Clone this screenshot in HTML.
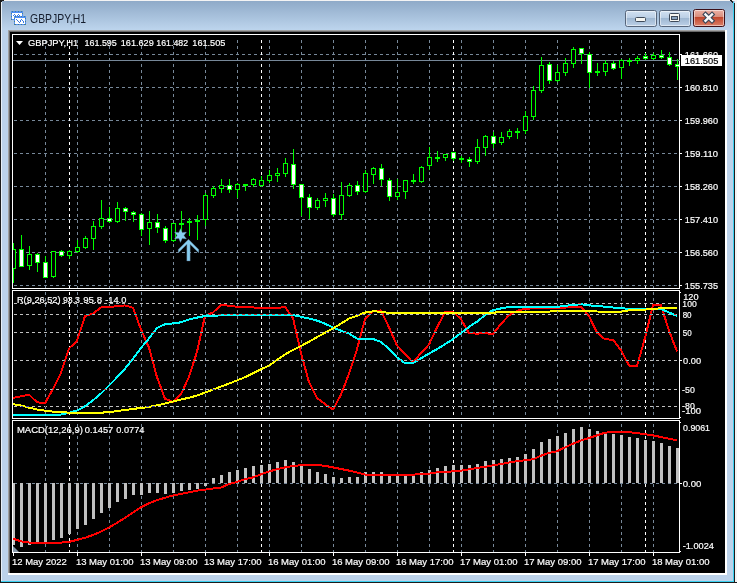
<!DOCTYPE html><html><head><meta charset="utf-8"><style>html,body{margin:0;padding:0;background:#000;overflow:hidden}svg{display:block}text{font-family:"Liberation Sans",sans-serif}</style></head><body>
<svg width="737" height="583" viewBox="0 0 737 583">
<defs><linearGradient id="tb" x1="0" y1="0" x2="0" y2="1"><stop offset="0" stop-color="#8faac8"/><stop offset="1" stop-color="#bdd5ed"/></linearGradient><linearGradient id="btn" x1="0" y1="0" x2="0" y2="1"><stop offset="0" stop-color="#dfe9f5"/><stop offset="0.45" stop-color="#c3d4e7"/><stop offset="0.5" stop-color="#a9bfd6"/><stop offset="1" stop-color="#c9daee"/></linearGradient><linearGradient id="cls" x1="0" y1="0" x2="0" y2="1"><stop offset="0" stop-color="#eab1a3"/><stop offset="0.45" stop-color="#d58572"/><stop offset="0.5" stop-color="#bf4526"/><stop offset="1" stop-color="#d27d66"/></linearGradient></defs>
<rect x="0" y="0" width="737" height="583" fill="#bcd2ea"/>
<rect x="0" y="0" width="737" height="1" fill="#f4f4f4"/>
<rect x="1" y="1" width="733" height="29" fill="url(#tb)"/>
<rect x="0" y="0" width="1" height="583" fill="#1c1c1c"/>
<rect x="1" y="1" width="1" height="581" fill="#e8f0f8"/>
<rect x="734" y="3" width="1" height="580" fill="#1c1c1c"/>
<rect x="735" y="0" width="2" height="583" fill="#f4f4f4"/>
<path d="M730 0 h2 v1 h1 v1 h1 v1 h-2 v-1 h-1 v-1 h-1z" fill="#1c1c1c"/><rect x="732" y="1" width="1" height="1" fill="#2a2a2a"/><rect x="733" y="2" width="1" height="1" fill="#2a2a2a"/>
<path d="M0 0 h4 v1 h-2 v1 h-1 v2 h-1z" fill="#1c1c1c"/>
<rect x="733" y="2" width="1" height="580" fill="#3ad0f0"/>
<rect x="1" y="581" width="733" height="1" fill="#3ad0f0"/>
<rect x="0" y="582" width="737" height="1" fill="#1c1c1c"/>
<rect x="8" y="30" width="719" height="545" fill="#ffffff"/>
<rect x="8" y="30" width="717" height="1" fill="#a0a0a0"/><rect x="8" y="30" width="1" height="543" fill="#a0a0a0"/>
<rect x="9" y="31" width="716" height="1" fill="#696969"/><rect x="9" y="31" width="1" height="542" fill="#696969"/>
<rect x="10" y="32" width="715" height="541" fill="#000"/>
<g shape-rendering="crispEdges">
<rect x="11" y="11" width="12" height="9" fill="#4f8ff7"/>
<rect x="12" y="13" width="10" height="6" fill="#ffffff"/>
<rect x="12" y="11" width="1" height="1" fill="#4a7f86"/>
<rect x="15" y="11" width="1" height="1" fill="#4a7f86"/>
<rect x="18" y="11" width="1" height="1" fill="#4a7f86"/>
<rect x="21" y="11" width="1" height="1" fill="#4a7f86"/>
<rect x="11" y="13" width="1" height="1" fill="#4a7f86"/>
<rect x="22" y="13" width="1" height="1" fill="#4a7f86"/>
<rect x="11" y="16" width="1" height="1" fill="#4a7f86"/>
<rect x="22" y="16" width="1" height="1" fill="#4a7f86"/>
<rect x="11" y="19" width="1" height="1" fill="#4a7f86"/>
<rect x="22" y="19" width="1" height="1" fill="#4a7f86"/>
<rect x="13" y="15" width="1" height="1" fill="#3d7be0"/>
<rect x="14" y="14" width="1" height="1" fill="#3d7be0"/>
<rect x="15" y="15" width="1" height="1" fill="#3d7be0"/>
<rect x="16" y="16" width="1" height="1" fill="#3d7be0"/>
<rect x="17" y="15" width="1" height="1" fill="#3d7be0"/>
<rect x="18" y="14" width="1" height="1" fill="#3d7be0"/>
<rect x="19" y="15" width="1" height="1" fill="#3d7be0"/>
<rect x="20" y="16" width="1" height="1" fill="#3d7be0"/>
<rect x="14" y="16" width="12" height="9" fill="#4f8ff7"/>
<rect x="15" y="18" width="10" height="6" fill="#ffffff"/>
<rect x="15" y="16" width="1" height="1" fill="#4a7f86"/>
<rect x="18" y="16" width="1" height="1" fill="#4a7f86"/>
<rect x="21" y="16" width="1" height="1" fill="#4a7f86"/>
<rect x="24" y="16" width="1" height="1" fill="#4a7f86"/>
<rect x="14" y="18" width="1" height="1" fill="#4a7f86"/>
<rect x="25" y="18" width="1" height="1" fill="#4a7f86"/>
<rect x="14" y="21" width="1" height="1" fill="#4a7f86"/>
<rect x="25" y="21" width="1" height="1" fill="#4a7f86"/>
<rect x="14" y="24" width="1" height="1" fill="#4a7f86"/>
<rect x="25" y="24" width="1" height="1" fill="#4a7f86"/>
<rect x="15" y="24" width="1" height="1" fill="#4a7f86"/>
<rect x="18" y="24" width="1" height="1" fill="#4a7f86"/>
<rect x="21" y="24" width="1" height="1" fill="#4a7f86"/>
<rect x="24" y="24" width="1" height="1" fill="#4a7f86"/>
<rect x="16" y="19" width="1" height="1" fill="#3d7be0"/>
<rect x="17" y="20" width="1" height="1" fill="#3d7be0"/>
<rect x="18" y="21" width="1" height="1" fill="#3d7be0"/>
<rect x="19" y="22" width="1" height="1" fill="#3d7be0"/>
<rect x="20" y="21" width="1" height="1" fill="#3d7be0"/>
<rect x="20" y="20" width="1" height="1" fill="#3d7be0"/>
<rect x="21" y="19" width="1" height="1" fill="#3d7be0"/>
<rect x="22" y="20" width="1" height="1" fill="#3d7be0"/>
<rect x="23" y="21" width="1" height="1" fill="#3d7be0"/>
<rect x="23" y="22" width="1" height="1" fill="#3d7be0"/>
</g>
<defs><linearGradient id="btn2" x1="0" y1="0" x2="0" y2="1"><stop offset="0" stop-color="#d3e2f2"/><stop offset="0.44" stop-color="#bcd0e6"/><stop offset="0.45" stop-color="#9cb5d0"/><stop offset="1" stop-color="#bed2e8"/></linearGradient><linearGradient id="cls2" x1="0" y1="0" x2="0" y2="1"><stop offset="0" stop-color="#eeb4a8"/><stop offset="0.44" stop-color="#d88d7c"/><stop offset="0.45" stop-color="#c0452b"/><stop offset="1" stop-color="#dd846c"/></linearGradient></defs>
<rect x="625.5" y="10.5" width="31" height="16" rx="2" ry="2" fill="url(#btn2)" stroke="#56657a" stroke-width="1"/>
<rect x="626.5" y="11.5" width="29" height="14" rx="1" ry="1" fill="none" stroke="rgba(255,255,255,0.5)" stroke-width="1"/>
<rect x="659.5" y="10.5" width="31" height="16" rx="2" ry="2" fill="url(#btn2)" stroke="#56657a" stroke-width="1"/>
<rect x="660.5" y="11.5" width="29" height="14" rx="1" ry="1" fill="none" stroke="rgba(255,255,255,0.5)" stroke-width="1"/>
<rect x="693.5" y="9.5" width="31" height="17" rx="2" ry="2" fill="url(#cls2)" stroke="#3c1018" stroke-width="1"/>
<rect x="694.5" y="10.5" width="29" height="15" rx="1" ry="1" fill="none" stroke="rgba(255,255,255,0.5)" stroke-width="1"/>
<rect x="635.5" y="17.5" width="10" height="4" rx="1" fill="#f6f6f2" stroke="#3e4a5a" stroke-width="1"/>
<rect x="669.5" y="13.5" width="10" height="8" rx="1" fill="#f6f6f2" stroke="#3e4a5a" stroke-width="1"/>
<rect x="671.5" y="16.5" width="6" height="3" fill="#8aa4c0" stroke="#3e4a5a" stroke-width="1"/>
<path d="M705.5 14.5 L712 20.8 M712 14.5 L705.5 20.8" stroke="#3a4658" stroke-width="4.6" stroke-linecap="square"/>
<path d="M705.5 14.5 L712 20.8 M712 14.5 L705.5 20.8" stroke="#f8f8f8" stroke-width="2.4" stroke-linecap="square"/>
<g shape-rendering="crispEdges">
<rect x="12.5" y="34.5" width="667" height="254" fill="none" stroke="#fff" stroke-width="1"/>
<rect x="12.5" y="290.5" width="667" height="128" fill="none" stroke="#fff" stroke-width="1"/>
<rect x="12.5" y="420.5" width="667" height="132" fill="none" stroke="#fff" stroke-width="1"/>
<line x1="45.5" y1="40" x2="45.5" y2="288" stroke="#778899" stroke-width="1" stroke-dasharray="3 3"/>
<line x1="77.5" y1="40" x2="77.5" y2="288" stroke="#778899" stroke-width="1" stroke-dasharray="3 3"/>
<line x1="109.5" y1="40" x2="109.5" y2="288" stroke="#778899" stroke-width="1" stroke-dasharray="3 3"/>
<line x1="141.5" y1="40" x2="141.5" y2="288" stroke="#778899" stroke-width="1" stroke-dasharray="3 3"/>
<line x1="173.5" y1="40" x2="173.5" y2="288" stroke="#778899" stroke-width="1" stroke-dasharray="3 3"/>
<line x1="205.5" y1="40" x2="205.5" y2="288" stroke="#778899" stroke-width="1" stroke-dasharray="3 3"/>
<line x1="237.5" y1="40" x2="237.5" y2="288" stroke="#778899" stroke-width="1" stroke-dasharray="3 3"/>
<line x1="269.5" y1="40" x2="269.5" y2="288" stroke="#778899" stroke-width="1" stroke-dasharray="3 3"/>
<line x1="301.5" y1="40" x2="301.5" y2="288" stroke="#778899" stroke-width="1" stroke-dasharray="3 3"/>
<line x1="333.5" y1="40" x2="333.5" y2="288" stroke="#778899" stroke-width="1" stroke-dasharray="3 3"/>
<line x1="365.5" y1="40" x2="365.5" y2="288" stroke="#778899" stroke-width="1" stroke-dasharray="3 3"/>
<line x1="397.5" y1="40" x2="397.5" y2="288" stroke="#778899" stroke-width="1" stroke-dasharray="3 3"/>
<line x1="429.5" y1="40" x2="429.5" y2="288" stroke="#778899" stroke-width="1" stroke-dasharray="3 3"/>
<line x1="461.5" y1="40" x2="461.5" y2="288" stroke="#778899" stroke-width="1" stroke-dasharray="3 3"/>
<line x1="493.5" y1="40" x2="493.5" y2="288" stroke="#778899" stroke-width="1" stroke-dasharray="3 3"/>
<line x1="525.5" y1="40" x2="525.5" y2="288" stroke="#778899" stroke-width="1" stroke-dasharray="3 3"/>
<line x1="557.5" y1="40" x2="557.5" y2="288" stroke="#778899" stroke-width="1" stroke-dasharray="3 3"/>
<line x1="589.5" y1="40" x2="589.5" y2="288" stroke="#778899" stroke-width="1" stroke-dasharray="3 3"/>
<line x1="621.5" y1="40" x2="621.5" y2="288" stroke="#778899" stroke-width="1" stroke-dasharray="3 3"/>
<line x1="653.5" y1="40" x2="653.5" y2="288" stroke="#778899" stroke-width="1" stroke-dasharray="3 3"/>
<line x1="45.5" y1="292" x2="45.5" y2="418" stroke="#778899" stroke-width="1" stroke-dasharray="3 3"/>
<line x1="77.5" y1="292" x2="77.5" y2="418" stroke="#778899" stroke-width="1" stroke-dasharray="3 3"/>
<line x1="109.5" y1="292" x2="109.5" y2="418" stroke="#778899" stroke-width="1" stroke-dasharray="3 3"/>
<line x1="141.5" y1="292" x2="141.5" y2="418" stroke="#778899" stroke-width="1" stroke-dasharray="3 3"/>
<line x1="173.5" y1="292" x2="173.5" y2="418" stroke="#778899" stroke-width="1" stroke-dasharray="3 3"/>
<line x1="205.5" y1="292" x2="205.5" y2="418" stroke="#778899" stroke-width="1" stroke-dasharray="3 3"/>
<line x1="237.5" y1="292" x2="237.5" y2="418" stroke="#778899" stroke-width="1" stroke-dasharray="3 3"/>
<line x1="269.5" y1="292" x2="269.5" y2="418" stroke="#778899" stroke-width="1" stroke-dasharray="3 3"/>
<line x1="301.5" y1="292" x2="301.5" y2="418" stroke="#778899" stroke-width="1" stroke-dasharray="3 3"/>
<line x1="333.5" y1="292" x2="333.5" y2="418" stroke="#778899" stroke-width="1" stroke-dasharray="3 3"/>
<line x1="365.5" y1="292" x2="365.5" y2="418" stroke="#778899" stroke-width="1" stroke-dasharray="3 3"/>
<line x1="397.5" y1="292" x2="397.5" y2="418" stroke="#778899" stroke-width="1" stroke-dasharray="3 3"/>
<line x1="429.5" y1="292" x2="429.5" y2="418" stroke="#778899" stroke-width="1" stroke-dasharray="3 3"/>
<line x1="461.5" y1="292" x2="461.5" y2="418" stroke="#778899" stroke-width="1" stroke-dasharray="3 3"/>
<line x1="493.5" y1="292" x2="493.5" y2="418" stroke="#778899" stroke-width="1" stroke-dasharray="3 3"/>
<line x1="525.5" y1="292" x2="525.5" y2="418" stroke="#778899" stroke-width="1" stroke-dasharray="3 3"/>
<line x1="557.5" y1="292" x2="557.5" y2="418" stroke="#778899" stroke-width="1" stroke-dasharray="3 3"/>
<line x1="589.5" y1="292" x2="589.5" y2="418" stroke="#778899" stroke-width="1" stroke-dasharray="3 3"/>
<line x1="621.5" y1="292" x2="621.5" y2="418" stroke="#778899" stroke-width="1" stroke-dasharray="3 3"/>
<line x1="653.5" y1="292" x2="653.5" y2="418" stroke="#778899" stroke-width="1" stroke-dasharray="3 3"/>
<line x1="45.5" y1="424" x2="45.5" y2="552" stroke="#778899" stroke-width="1" stroke-dasharray="3 3"/>
<line x1="77.5" y1="424" x2="77.5" y2="552" stroke="#778899" stroke-width="1" stroke-dasharray="3 3"/>
<line x1="109.5" y1="424" x2="109.5" y2="552" stroke="#778899" stroke-width="1" stroke-dasharray="3 3"/>
<line x1="141.5" y1="424" x2="141.5" y2="552" stroke="#778899" stroke-width="1" stroke-dasharray="3 3"/>
<line x1="173.5" y1="424" x2="173.5" y2="552" stroke="#778899" stroke-width="1" stroke-dasharray="3 3"/>
<line x1="205.5" y1="424" x2="205.5" y2="552" stroke="#778899" stroke-width="1" stroke-dasharray="3 3"/>
<line x1="237.5" y1="424" x2="237.5" y2="552" stroke="#778899" stroke-width="1" stroke-dasharray="3 3"/>
<line x1="269.5" y1="424" x2="269.5" y2="552" stroke="#778899" stroke-width="1" stroke-dasharray="3 3"/>
<line x1="301.5" y1="424" x2="301.5" y2="552" stroke="#778899" stroke-width="1" stroke-dasharray="3 3"/>
<line x1="333.5" y1="424" x2="333.5" y2="552" stroke="#778899" stroke-width="1" stroke-dasharray="3 3"/>
<line x1="365.5" y1="424" x2="365.5" y2="552" stroke="#778899" stroke-width="1" stroke-dasharray="3 3"/>
<line x1="397.5" y1="424" x2="397.5" y2="552" stroke="#778899" stroke-width="1" stroke-dasharray="3 3"/>
<line x1="429.5" y1="424" x2="429.5" y2="552" stroke="#778899" stroke-width="1" stroke-dasharray="3 3"/>
<line x1="461.5" y1="424" x2="461.5" y2="552" stroke="#778899" stroke-width="1" stroke-dasharray="3 3"/>
<line x1="493.5" y1="424" x2="493.5" y2="552" stroke="#778899" stroke-width="1" stroke-dasharray="3 3"/>
<line x1="525.5" y1="424" x2="525.5" y2="552" stroke="#778899" stroke-width="1" stroke-dasharray="3 3"/>
<line x1="557.5" y1="424" x2="557.5" y2="552" stroke="#778899" stroke-width="1" stroke-dasharray="3 3"/>
<line x1="589.5" y1="424" x2="589.5" y2="552" stroke="#778899" stroke-width="1" stroke-dasharray="3 3"/>
<line x1="621.5" y1="424" x2="621.5" y2="552" stroke="#778899" stroke-width="1" stroke-dasharray="3 3"/>
<line x1="653.5" y1="424" x2="653.5" y2="552" stroke="#778899" stroke-width="1" stroke-dasharray="3 3"/>
<line x1="14" y1="54.5" x2="679" y2="54.5" stroke="#778899" stroke-width="1" stroke-dasharray="3 3"/>
<line x1="14" y1="87.5" x2="679" y2="87.5" stroke="#778899" stroke-width="1" stroke-dasharray="3 3"/>
<line x1="14" y1="120.5" x2="679" y2="120.5" stroke="#778899" stroke-width="1" stroke-dasharray="3 3"/>
<line x1="14" y1="153.5" x2="679" y2="153.5" stroke="#778899" stroke-width="1" stroke-dasharray="3 3"/>
<line x1="14" y1="186.5" x2="679" y2="186.5" stroke="#778899" stroke-width="1" stroke-dasharray="3 3"/>
<line x1="14" y1="219.5" x2="679" y2="219.5" stroke="#778899" stroke-width="1" stroke-dasharray="3 3"/>
<line x1="14" y1="252.5" x2="679" y2="252.5" stroke="#778899" stroke-width="1" stroke-dasharray="3 3"/>
<line x1="14" y1="285.5" x2="679" y2="285.5" stroke="#778899" stroke-width="1" stroke-dasharray="3 3"/>
<line x1="14" y1="483.5" x2="679" y2="483.5" stroke="#778899" stroke-width="1" stroke-dasharray="3 3"/>
<line x1="69.5" y1="40" x2="69.5" y2="288" stroke="#ffffff" stroke-width="1" stroke-dasharray="3 3"/>
<line x1="261.5" y1="40" x2="261.5" y2="288" stroke="#ffffff" stroke-width="1" stroke-dasharray="3 3"/>
<line x1="453.5" y1="40" x2="453.5" y2="288" stroke="#ffffff" stroke-width="1" stroke-dasharray="3 3"/>
<line x1="645.5" y1="40" x2="645.5" y2="288" stroke="#ffffff" stroke-width="1" stroke-dasharray="3 3"/>
<line x1="69.5" y1="292" x2="69.5" y2="418" stroke="#ffffff" stroke-width="1" stroke-dasharray="3 3"/>
<line x1="261.5" y1="292" x2="261.5" y2="418" stroke="#ffffff" stroke-width="1" stroke-dasharray="3 3"/>
<line x1="453.5" y1="292" x2="453.5" y2="418" stroke="#ffffff" stroke-width="1" stroke-dasharray="3 3"/>
<line x1="645.5" y1="292" x2="645.5" y2="418" stroke="#ffffff" stroke-width="1" stroke-dasharray="3 3"/>
<line x1="69.5" y1="424" x2="69.5" y2="552" stroke="#ffffff" stroke-width="1" stroke-dasharray="3 3"/>
<line x1="261.5" y1="424" x2="261.5" y2="552" stroke="#ffffff" stroke-width="1" stroke-dasharray="3 3"/>
<line x1="453.5" y1="424" x2="453.5" y2="552" stroke="#ffffff" stroke-width="1" stroke-dasharray="3 3"/>
<line x1="645.5" y1="424" x2="645.5" y2="552" stroke="#ffffff" stroke-width="1" stroke-dasharray="3 3"/>
<rect x="13" y="60" width="667" height="1" fill="#778899"/>
<defs><clipPath id="cmain"><rect x="13" y="35" width="666" height="253"/></clipPath></defs>
<g clip-path="url(#cmain)">
<rect x="13" y="243" width="1" height="40" fill="#00ff00"/>
<rect x="11" y="249" width="5" height="20" fill="#00ff00"/>
<rect x="12" y="250" width="3" height="18" fill="#000000"/>
<rect x="21" y="235" width="1" height="32" fill="#00ff00"/>
<rect x="19" y="249" width="5" height="18" fill="#00ff00"/>
<rect x="20" y="250" width="3" height="16" fill="#ffffff"/>
<rect x="29" y="246" width="1" height="24" fill="#00ff00"/>
<rect x="27" y="254" width="5" height="12" fill="#00ff00"/>
<rect x="28" y="255" width="3" height="10" fill="#000000"/>
<rect x="37" y="253" width="1" height="19" fill="#00ff00"/>
<rect x="35" y="254" width="5" height="9" fill="#00ff00"/>
<rect x="36" y="255" width="3" height="7" fill="#ffffff"/>
<rect x="45" y="256" width="1" height="22" fill="#00ff00"/>
<rect x="43" y="262" width="5" height="16" fill="#00ff00"/>
<rect x="44" y="263" width="3" height="14" fill="#ffffff"/>
<rect x="53" y="251" width="1" height="27" fill="#00ff00"/>
<rect x="51" y="251" width="5" height="26" fill="#00ff00"/>
<rect x="52" y="252" width="3" height="24" fill="#000000"/>
<rect x="61" y="250" width="1" height="7" fill="#00ff00"/>
<rect x="59" y="251" width="5" height="5" fill="#00ff00"/>
<rect x="60" y="252" width="3" height="3" fill="#ffffff"/>
<rect x="69" y="250" width="1" height="9" fill="#00ff00"/>
<rect x="67" y="251" width="5" height="5" fill="#00ff00"/>
<rect x="68" y="252" width="3" height="3" fill="#000000"/>
<rect x="77" y="240" width="1" height="13" fill="#00ff00"/>
<rect x="75" y="247" width="5" height="5" fill="#00ff00"/>
<rect x="76" y="248" width="3" height="3" fill="#000000"/>
<rect x="85" y="236" width="1" height="13" fill="#00ff00"/>
<rect x="83" y="238" width="5" height="10" fill="#00ff00"/>
<rect x="84" y="239" width="3" height="8" fill="#000000"/>
<rect x="93" y="221" width="1" height="29" fill="#00ff00"/>
<rect x="91" y="226" width="5" height="13" fill="#00ff00"/>
<rect x="92" y="227" width="3" height="11" fill="#000000"/>
<rect x="101" y="200" width="1" height="29" fill="#00ff00"/>
<rect x="99" y="218" width="5" height="9" fill="#00ff00"/>
<rect x="100" y="219" width="3" height="7" fill="#000000"/>
<rect x="109" y="207" width="1" height="16" fill="#00ff00"/>
<rect x="107" y="218" width="5" height="4" fill="#00ff00"/>
<rect x="108" y="219" width="3" height="2" fill="#ffffff"/>
<rect x="117" y="202" width="1" height="21" fill="#00ff00"/>
<rect x="115" y="208" width="5" height="14" fill="#00ff00"/>
<rect x="116" y="209" width="3" height="12" fill="#000000"/>
<rect x="125" y="207" width="1" height="14" fill="#00ff00"/>
<rect x="123" y="208" width="5" height="4" fill="#00ff00"/>
<rect x="124" y="209" width="3" height="2" fill="#ffffff"/>
<rect x="133" y="211" width="1" height="11" fill="#00ff00"/>
<rect x="131" y="212" width="5" height="3" fill="#00ff00"/>
<rect x="132" y="213" width="3" height="1" fill="#ffffff"/>
<rect x="141" y="213" width="1" height="23" fill="#00ff00"/>
<rect x="139" y="214" width="5" height="16" fill="#00ff00"/>
<rect x="140" y="215" width="3" height="14" fill="#ffffff"/>
<rect x="149" y="211" width="1" height="34" fill="#00ff00"/>
<rect x="147" y="222" width="5" height="7" fill="#00ff00"/>
<rect x="148" y="223" width="3" height="5" fill="#000000"/>
<rect x="157" y="214" width="1" height="19" fill="#00ff00"/>
<rect x="155" y="222" width="5" height="6" fill="#00ff00"/>
<rect x="156" y="223" width="3" height="4" fill="#ffffff"/>
<rect x="165" y="226" width="1" height="17" fill="#00ff00"/>
<rect x="163" y="228" width="5" height="13" fill="#00ff00"/>
<rect x="164" y="229" width="3" height="11" fill="#ffffff"/>
<rect x="173" y="223" width="1" height="19" fill="#00ff00"/>
<rect x="171" y="223" width="5" height="18" fill="#00ff00"/>
<rect x="172" y="224" width="3" height="16" fill="#000000"/>
<rect x="181" y="211" width="1" height="25" fill="#00ff00"/>
<rect x="179" y="223" width="5" height="2" fill="#00ff00"/>
<rect x="189" y="218" width="1" height="18" fill="#00ff00"/>
<rect x="187" y="221" width="5" height="2" fill="#00ff00"/>
<rect x="197" y="215" width="1" height="25" fill="#00ff00"/>
<rect x="195" y="220" width="5" height="2" fill="#00ff00"/>
<rect x="205" y="193" width="1" height="33" fill="#00ff00"/>
<rect x="203" y="195" width="5" height="25" fill="#00ff00"/>
<rect x="204" y="196" width="3" height="23" fill="#000000"/>
<rect x="213" y="186" width="1" height="12" fill="#00ff00"/>
<rect x="211" y="188" width="5" height="8" fill="#00ff00"/>
<rect x="212" y="189" width="3" height="6" fill="#000000"/>
<rect x="221" y="179" width="1" height="14" fill="#00ff00"/>
<rect x="219" y="185" width="5" height="4" fill="#00ff00"/>
<rect x="220" y="186" width="3" height="2" fill="#000000"/>
<rect x="229" y="179" width="1" height="14" fill="#00ff00"/>
<rect x="227" y="185" width="5" height="5" fill="#00ff00"/>
<rect x="228" y="186" width="3" height="3" fill="#ffffff"/>
<rect x="237" y="183" width="1" height="15" fill="#00ff00"/>
<rect x="235" y="184" width="5" height="6" fill="#00ff00"/>
<rect x="236" y="185" width="3" height="4" fill="#000000"/>
<rect x="245" y="184" width="1" height="7" fill="#00ff00"/>
<rect x="243" y="184" width="5" height="2" fill="#00ff00"/>
<rect x="253" y="178" width="1" height="9" fill="#00ff00"/>
<rect x="251" y="179" width="5" height="6" fill="#00ff00"/>
<rect x="252" y="180" width="3" height="4" fill="#000000"/>
<rect x="261" y="176" width="1" height="11" fill="#00ff00"/>
<rect x="259" y="180" width="5" height="6" fill="#00ff00"/>
<rect x="260" y="181" width="3" height="4" fill="#000000"/>
<rect x="269" y="170" width="1" height="13" fill="#00ff00"/>
<rect x="267" y="175" width="5" height="6" fill="#00ff00"/>
<rect x="268" y="176" width="3" height="4" fill="#000000"/>
<rect x="277" y="168" width="1" height="14" fill="#00ff00"/>
<rect x="275" y="173" width="5" height="3" fill="#00ff00"/>
<rect x="276" y="174" width="3" height="1" fill="#000000"/>
<rect x="285" y="158" width="1" height="19" fill="#00ff00"/>
<rect x="283" y="163" width="5" height="11" fill="#00ff00"/>
<rect x="284" y="164" width="3" height="9" fill="#000000"/>
<rect x="293" y="149" width="1" height="40" fill="#00ff00"/>
<rect x="291" y="164" width="5" height="21" fill="#00ff00"/>
<rect x="292" y="165" width="3" height="19" fill="#ffffff"/>
<rect x="301" y="184" width="1" height="32" fill="#00ff00"/>
<rect x="299" y="184" width="5" height="14" fill="#00ff00"/>
<rect x="300" y="185" width="3" height="12" fill="#ffffff"/>
<rect x="309" y="194" width="1" height="25" fill="#00ff00"/>
<rect x="307" y="197" width="5" height="11" fill="#00ff00"/>
<rect x="308" y="198" width="3" height="9" fill="#ffffff"/>
<rect x="317" y="198" width="1" height="12" fill="#00ff00"/>
<rect x="315" y="200" width="5" height="8" fill="#00ff00"/>
<rect x="316" y="201" width="3" height="6" fill="#000000"/>
<rect x="325" y="193" width="1" height="14" fill="#00ff00"/>
<rect x="323" y="198" width="5" height="3" fill="#00ff00"/>
<rect x="324" y="199" width="3" height="1" fill="#000000"/>
<rect x="333" y="194" width="1" height="23" fill="#00ff00"/>
<rect x="331" y="198" width="5" height="17" fill="#00ff00"/>
<rect x="332" y="199" width="3" height="15" fill="#ffffff"/>
<rect x="341" y="182" width="1" height="38" fill="#00ff00"/>
<rect x="339" y="195" width="5" height="20" fill="#00ff00"/>
<rect x="340" y="196" width="3" height="18" fill="#000000"/>
<rect x="349" y="183" width="1" height="14" fill="#00ff00"/>
<rect x="347" y="185" width="5" height="11" fill="#00ff00"/>
<rect x="348" y="186" width="3" height="9" fill="#000000"/>
<rect x="357" y="181" width="1" height="14" fill="#00ff00"/>
<rect x="355" y="185" width="5" height="7" fill="#00ff00"/>
<rect x="356" y="186" width="3" height="5" fill="#ffffff"/>
<rect x="365" y="170" width="1" height="23" fill="#00ff00"/>
<rect x="363" y="173" width="5" height="19" fill="#00ff00"/>
<rect x="364" y="174" width="3" height="17" fill="#000000"/>
<rect x="373" y="167" width="1" height="17" fill="#00ff00"/>
<rect x="371" y="168" width="5" height="7" fill="#00ff00"/>
<rect x="372" y="169" width="3" height="5" fill="#000000"/>
<rect x="381" y="164" width="1" height="22" fill="#00ff00"/>
<rect x="379" y="168" width="5" height="12" fill="#00ff00"/>
<rect x="380" y="169" width="3" height="10" fill="#ffffff"/>
<rect x="389" y="178" width="1" height="23" fill="#00ff00"/>
<rect x="387" y="180" width="5" height="17" fill="#00ff00"/>
<rect x="388" y="181" width="3" height="15" fill="#ffffff"/>
<rect x="397" y="179" width="1" height="21" fill="#00ff00"/>
<rect x="395" y="192" width="5" height="5" fill="#00ff00"/>
<rect x="396" y="193" width="3" height="3" fill="#000000"/>
<rect x="405" y="180" width="1" height="19" fill="#00ff00"/>
<rect x="403" y="180" width="5" height="12" fill="#00ff00"/>
<rect x="404" y="181" width="3" height="10" fill="#000000"/>
<rect x="413" y="174" width="1" height="10" fill="#00ff00"/>
<rect x="411" y="180" width="5" height="2" fill="#00ff00"/>
<rect x="421" y="166" width="1" height="17" fill="#00ff00"/>
<rect x="419" y="167" width="5" height="15" fill="#00ff00"/>
<rect x="420" y="168" width="3" height="13" fill="#000000"/>
<rect x="429" y="147" width="1" height="23" fill="#00ff00"/>
<rect x="427" y="157" width="5" height="9" fill="#00ff00"/>
<rect x="428" y="158" width="3" height="7" fill="#000000"/>
<rect x="437" y="151" width="1" height="11" fill="#00ff00"/>
<rect x="435" y="157" width="5" height="2" fill="#00ff00"/>
<rect x="445" y="154" width="1" height="7" fill="#00ff00"/>
<rect x="443" y="154" width="5" height="4" fill="#00ff00"/>
<rect x="444" y="155" width="3" height="2" fill="#000000"/>
<rect x="453" y="152" width="1" height="9" fill="#00ff00"/>
<rect x="451" y="152" width="5" height="7" fill="#00ff00"/>
<rect x="452" y="153" width="3" height="5" fill="#ffffff"/>
<rect x="461" y="156" width="1" height="7" fill="#00ff00"/>
<rect x="459" y="158" width="5" height="2" fill="#00ff00"/>
<rect x="469" y="157" width="1" height="10" fill="#00ff00"/>
<rect x="467" y="159" width="5" height="3" fill="#00ff00"/>
<rect x="468" y="160" width="3" height="1" fill="#ffffff"/>
<rect x="477" y="139" width="1" height="25" fill="#00ff00"/>
<rect x="475" y="147" width="5" height="15" fill="#00ff00"/>
<rect x="476" y="148" width="3" height="13" fill="#000000"/>
<rect x="485" y="135" width="1" height="21" fill="#00ff00"/>
<rect x="483" y="136" width="5" height="12" fill="#00ff00"/>
<rect x="484" y="137" width="3" height="10" fill="#000000"/>
<rect x="493" y="132" width="1" height="16" fill="#00ff00"/>
<rect x="491" y="136" width="5" height="8" fill="#00ff00"/>
<rect x="492" y="137" width="3" height="6" fill="#ffffff"/>
<rect x="501" y="132" width="1" height="13" fill="#00ff00"/>
<rect x="499" y="137" width="5" height="6" fill="#00ff00"/>
<rect x="500" y="138" width="3" height="4" fill="#000000"/>
<rect x="509" y="129" width="1" height="10" fill="#00ff00"/>
<rect x="507" y="131" width="5" height="6" fill="#00ff00"/>
<rect x="508" y="132" width="3" height="4" fill="#000000"/>
<rect x="517" y="128" width="1" height="11" fill="#00ff00"/>
<rect x="515" y="131" width="5" height="2" fill="#00ff00"/>
<rect x="525" y="111" width="1" height="23" fill="#00ff00"/>
<rect x="523" y="116" width="5" height="15" fill="#00ff00"/>
<rect x="524" y="117" width="3" height="13" fill="#000000"/>
<rect x="533" y="86" width="1" height="34" fill="#00ff00"/>
<rect x="531" y="90" width="5" height="27" fill="#00ff00"/>
<rect x="532" y="91" width="3" height="25" fill="#000000"/>
<rect x="541" y="57" width="1" height="36" fill="#00ff00"/>
<rect x="539" y="65" width="5" height="26" fill="#00ff00"/>
<rect x="540" y="66" width="3" height="24" fill="#000000"/>
<rect x="549" y="62" width="1" height="22" fill="#00ff00"/>
<rect x="547" y="64" width="5" height="17" fill="#00ff00"/>
<rect x="548" y="65" width="3" height="15" fill="#ffffff"/>
<rect x="557" y="65" width="1" height="17" fill="#00ff00"/>
<rect x="555" y="72" width="5" height="9" fill="#00ff00"/>
<rect x="556" y="73" width="3" height="7" fill="#000000"/>
<rect x="565" y="58" width="1" height="18" fill="#00ff00"/>
<rect x="563" y="63" width="5" height="10" fill="#00ff00"/>
<rect x="564" y="64" width="3" height="8" fill="#000000"/>
<rect x="573" y="47" width="1" height="21" fill="#00ff00"/>
<rect x="571" y="49" width="5" height="15" fill="#00ff00"/>
<rect x="572" y="50" width="3" height="13" fill="#000000"/>
<rect x="581" y="48" width="1" height="16" fill="#00ff00"/>
<rect x="579" y="48" width="5" height="6" fill="#00ff00"/>
<rect x="580" y="49" width="3" height="4" fill="#ffffff"/>
<rect x="589" y="52" width="1" height="36" fill="#00ff00"/>
<rect x="587" y="54" width="5" height="19" fill="#00ff00"/>
<rect x="588" y="55" width="3" height="17" fill="#ffffff"/>
<rect x="597" y="63" width="1" height="13" fill="#00ff00"/>
<rect x="595" y="71" width="5" height="2" fill="#00ff00"/>
<rect x="605" y="60" width="1" height="16" fill="#00ff00"/>
<rect x="603" y="63" width="5" height="9" fill="#00ff00"/>
<rect x="604" y="64" width="3" height="7" fill="#000000"/>
<rect x="613" y="61" width="1" height="9" fill="#00ff00"/>
<rect x="611" y="63" width="5" height="6" fill="#00ff00"/>
<rect x="612" y="64" width="3" height="4" fill="#ffffff"/>
<rect x="621" y="59" width="1" height="20" fill="#00ff00"/>
<rect x="619" y="60" width="5" height="8" fill="#00ff00"/>
<rect x="620" y="61" width="3" height="6" fill="#000000"/>
<rect x="629" y="58" width="1" height="8" fill="#00ff00"/>
<rect x="627" y="60" width="5" height="2" fill="#00ff00"/>
<rect x="637" y="56" width="1" height="8" fill="#00ff00"/>
<rect x="635" y="58" width="5" height="3" fill="#00ff00"/>
<rect x="636" y="59" width="3" height="1" fill="#000000"/>
<rect x="645" y="53" width="1" height="7" fill="#00ff00"/>
<rect x="643" y="56" width="5" height="3" fill="#00ff00"/>
<rect x="644" y="57" width="3" height="1" fill="#ffffff"/>
<rect x="653" y="53" width="1" height="7" fill="#00ff00"/>
<rect x="651" y="55" width="5" height="4" fill="#00ff00"/>
<rect x="652" y="56" width="3" height="2" fill="#000000"/>
<rect x="661" y="50" width="1" height="9" fill="#00ff00"/>
<rect x="659" y="55" width="5" height="3" fill="#00ff00"/>
<rect x="660" y="56" width="3" height="1" fill="#ffffff"/>
<rect x="669" y="52" width="1" height="14" fill="#00ff00"/>
<rect x="667" y="57" width="5" height="8" fill="#00ff00"/>
<rect x="668" y="58" width="3" height="6" fill="#ffffff"/>
<rect x="677" y="59" width="1" height="21" fill="#00ff00"/>
<rect x="675" y="64" width="5" height="3" fill="#00ff00"/>
<rect x="676" y="65" width="3" height="1" fill="#ffffff"/>
</g>
</g>
<g><path d="M180.50 228.50 L182.25 232.47 L186.56 232.00 L184.00 235.50 L186.56 239.00 L182.25 238.53 L180.50 242.50 L178.75 238.53 L174.44 239.00 L177.00 235.50 L174.44 232.00 L178.75 232.47 Z" fill="#87cdf0" stroke="#4a5a70" stroke-width="0.35"/><path d="M188.5 239.3 L198.8 249.6 L198.8 253 L190.2 244.4 L190.2 261 L186.8 261 L186.8 244.4 L178.2 253 L178.2 249.6 Z" fill="#87cdf0" stroke="#4a5a70" stroke-width="0.35"/></g>
<defs><clipPath id="crsi"><rect x="13" y="291" width="666" height="127"/></clipPath><clipPath id="cmacd"><rect x="13" y="421" width="666" height="131"/></clipPath></defs>
<g shape-rendering="crispEdges" clip-path="url(#cmacd)">
<rect x="12" y="483" width="3" height="62" fill="#c0c0c0"/>
<rect x="20" y="483" width="3" height="64" fill="#c0c0c0"/>
<rect x="28" y="483" width="3" height="62" fill="#c0c0c0"/>
<rect x="36" y="483" width="3" height="60" fill="#c0c0c0"/>
<rect x="44" y="483" width="3" height="59" fill="#c0c0c0"/>
<rect x="52" y="483" width="3" height="57" fill="#c0c0c0"/>
<rect x="60" y="483" width="3" height="55" fill="#c0c0c0"/>
<rect x="68" y="483" width="3" height="51" fill="#c0c0c0"/>
<rect x="76" y="483" width="3" height="46" fill="#c0c0c0"/>
<rect x="84" y="483" width="3" height="42" fill="#c0c0c0"/>
<rect x="92" y="483" width="3" height="36" fill="#c0c0c0"/>
<rect x="100" y="483" width="3" height="30" fill="#c0c0c0"/>
<rect x="108" y="483" width="3" height="25" fill="#c0c0c0"/>
<rect x="116" y="483" width="3" height="19" fill="#c0c0c0"/>
<rect x="124" y="483" width="3" height="16" fill="#c0c0c0"/>
<rect x="132" y="483" width="3" height="12" fill="#c0c0c0"/>
<rect x="140" y="483" width="3" height="12" fill="#c0c0c0"/>
<rect x="148" y="483" width="3" height="10" fill="#c0c0c0"/>
<rect x="156" y="483" width="3" height="10" fill="#c0c0c0"/>
<rect x="164" y="483" width="3" height="11" fill="#c0c0c0"/>
<rect x="172" y="483" width="3" height="10" fill="#c0c0c0"/>
<rect x="180" y="483" width="3" height="8" fill="#c0c0c0"/>
<rect x="188" y="483" width="3" height="7" fill="#c0c0c0"/>
<rect x="196" y="483" width="3" height="6" fill="#c0c0c0"/>
<rect x="204" y="483" width="3" height="3" fill="#c0c0c0"/>
<rect x="212" y="478" width="3" height="5" fill="#c0c0c0"/>
<rect x="220" y="475" width="3" height="8" fill="#c0c0c0"/>
<rect x="228" y="472" width="3" height="11" fill="#c0c0c0"/>
<rect x="236" y="470" width="3" height="13" fill="#c0c0c0"/>
<rect x="244" y="468" width="3" height="15" fill="#c0c0c0"/>
<rect x="252" y="466" width="3" height="17" fill="#c0c0c0"/>
<rect x="260" y="465" width="3" height="18" fill="#c0c0c0"/>
<rect x="268" y="464" width="3" height="19" fill="#c0c0c0"/>
<rect x="276" y="462" width="3" height="21" fill="#c0c0c0"/>
<rect x="284" y="460" width="3" height="23" fill="#c0c0c0"/>
<rect x="292" y="462" width="3" height="21" fill="#c0c0c0"/>
<rect x="300" y="465" width="3" height="18" fill="#c0c0c0"/>
<rect x="308" y="469" width="3" height="14" fill="#c0c0c0"/>
<rect x="316" y="472" width="3" height="11" fill="#c0c0c0"/>
<rect x="324" y="474" width="3" height="9" fill="#c0c0c0"/>
<rect x="332" y="477" width="3" height="6" fill="#c0c0c0"/>
<rect x="340" y="478" width="3" height="5" fill="#c0c0c0"/>
<rect x="348" y="477" width="3" height="6" fill="#c0c0c0"/>
<rect x="356" y="477" width="3" height="6" fill="#c0c0c0"/>
<rect x="364" y="472" width="3" height="11" fill="#c0c0c0"/>
<rect x="372" y="472" width="3" height="11" fill="#c0c0c0"/>
<rect x="380" y="472" width="3" height="11" fill="#c0c0c0"/>
<rect x="388" y="476" width="3" height="7" fill="#c0c0c0"/>
<rect x="396" y="476" width="3" height="7" fill="#c0c0c0"/>
<rect x="404" y="476" width="3" height="7" fill="#c0c0c0"/>
<rect x="412" y="474" width="3" height="9" fill="#c0c0c0"/>
<rect x="420" y="472" width="3" height="11" fill="#c0c0c0"/>
<rect x="428" y="470" width="3" height="13" fill="#c0c0c0"/>
<rect x="436" y="468" width="3" height="15" fill="#c0c0c0"/>
<rect x="444" y="466" width="3" height="17" fill="#c0c0c0"/>
<rect x="452" y="465" width="3" height="18" fill="#c0c0c0"/>
<rect x="460" y="465" width="3" height="18" fill="#c0c0c0"/>
<rect x="468" y="465" width="3" height="18" fill="#c0c0c0"/>
<rect x="476" y="464" width="3" height="19" fill="#c0c0c0"/>
<rect x="484" y="461" width="3" height="22" fill="#c0c0c0"/>
<rect x="492" y="460" width="3" height="23" fill="#c0c0c0"/>
<rect x="500" y="459" width="3" height="24" fill="#c0c0c0"/>
<rect x="508" y="458" width="3" height="25" fill="#c0c0c0"/>
<rect x="516" y="457" width="3" height="26" fill="#c0c0c0"/>
<rect x="524" y="454" width="3" height="29" fill="#c0c0c0"/>
<rect x="532" y="449" width="3" height="34" fill="#c0c0c0"/>
<rect x="540" y="442" width="3" height="41" fill="#c0c0c0"/>
<rect x="548" y="439" width="3" height="44" fill="#c0c0c0"/>
<rect x="556" y="436" width="3" height="47" fill="#c0c0c0"/>
<rect x="564" y="433" width="3" height="50" fill="#c0c0c0"/>
<rect x="572" y="429" width="3" height="54" fill="#c0c0c0"/>
<rect x="580" y="427" width="3" height="56" fill="#c0c0c0"/>
<rect x="588" y="429" width="3" height="54" fill="#c0c0c0"/>
<rect x="596" y="431" width="3" height="52" fill="#c0c0c0"/>
<rect x="604" y="433" width="3" height="50" fill="#c0c0c0"/>
<rect x="612" y="434" width="3" height="49" fill="#c0c0c0"/>
<rect x="620" y="435" width="3" height="48" fill="#c0c0c0"/>
<rect x="628" y="437" width="3" height="46" fill="#c0c0c0"/>
<rect x="636" y="438" width="3" height="45" fill="#c0c0c0"/>
<rect x="644" y="440" width="3" height="43" fill="#c0c0c0"/>
<rect x="652" y="441" width="3" height="42" fill="#c0c0c0"/>
<rect x="660" y="443" width="3" height="40" fill="#c0c0c0"/>
<rect x="668" y="446" width="3" height="37" fill="#c0c0c0"/>
<rect x="676" y="448" width="3" height="35" fill="#c0c0c0"/>
</g>
<polyline clip-path="url(#cmacd)" points="13,538.7 21,541.4 29,542.5 37,543.0 45,543.0 53,542.9 61,542.6 69,541.9 77,539.9 85,537.8 93,535.0 101,531.6 109,527.5 117,522.8 125,517.9 133,512.6 141,507.3 149,503.3 157,500.2 165,497.7 173,495.5 181,493.9 189,492.3 197,490.7 205,489.6 213,488.5 221,487.5 229,484.1 237,481.9 245,479.1 253,477.4 261,474.3 269,471.5 277,469.2 285,467.4 293,466.0 301,465.2 309,464.7 317,464.9 325,465.8 333,467.4 341,469.0 349,470.6 357,472.6 365,474.5 373,475.1 381,475.1 389,475.1 397,474.9 405,474.8 413,474.6 421,474.2 429,473.7 437,472.4 445,471.8 453,471.4 461,470.6 469,469.4 477,468.0 485,466.8 493,465.4 501,464.0 509,462.5 517,461.2 525,460.2 533,459.3 541,455.7 549,452.9 557,451.3 565,447.4 573,443.7 581,440.5 589,438.0 597,435.4 605,432.7 613,431.9 621,431.8 629,432.1 637,433.1 645,434.2 653,435.4 661,437.0 669,438.7 677,440.3" fill="none" stroke="#ff0000" stroke-width="2" stroke-linejoin="round" shape-rendering="crispEdges"/>
<path d="M13 546 L13 552 L19 552 Z" fill="#8899aa"/>
<polyline clip-path="url(#crsi)" points="13,397.8 21,396.4 29,394.6 37,402.3 45,403.2 53,389.0 61,372.8 69,348.5 77,341.0 85,316.0 93,313.5 101,307.5 109,306.8 117,306.3 125,305.4 133,307.7 141,329.5 149,347.7 157,377.2 165,398.7 173,401.8 181,394.4 189,376.7 197,351.8 205,315.9 213,312.5 221,304.8 229,305.7 237,306.8 245,306.9 253,307.4 261,308.3 269,308.1 277,308.0 285,307.0 293,318.1 301,353.2 309,382.2 317,398.0 325,404.0 333,409.5 341,394.5 349,373.7 357,349.3 365,319.0 373,311.2 381,310.4 389,327.4 397,345.4 405,354.0 413,362.6 421,353.0 429,344.5 437,327.5 445,312.2 453,311.8 461,319.2 469,333.2 477,333.6 485,333.2 493,334.0 501,323.8 509,315.3 517,310.9 525,308.8 533,308.3 541,308.3 549,308.3 557,308.3 565,307.6 573,306.9 581,306.8 589,316.1 597,332.7 605,339.3 613,339.7 621,350.2 629,365.5 637,366.0 645,337.9 653,305.3 661,305.3 669,330.6 677,351.5" fill="none" stroke="#ff0000" stroke-width="2" stroke-linejoin="round" shape-rendering="crispEdges"/>
<polyline clip-path="url(#crsi)" points="13,414.5 21,414.5 29,414.5 37,414.5 45,414.5 53,414.5 61,414.5 69,412.7 77,410.4 85,406.4 93,400.3 101,393.5 109,385.6 117,377.4 125,368.7 133,358.7 141,347.9 149,338.4 157,328.0 165,324.2 173,323.4 181,322.3 189,319.4 197,317.6 205,316.0 213,315.7 221,315.4 229,315.2 237,315.0 245,314.8 253,314.7 261,314.7 269,314.7 277,314.7 285,314.7 293,315.1 301,316.8 309,318.5 317,320.6 325,323.7 333,327.5 341,330.7 349,333.6 357,338.6 365,339.0 373,339.0 381,342.0 389,348.8 397,357.5 405,363.2 413,363.2 421,358.3 429,353.6 437,349.1 445,344.3 453,339.1 461,333.1 469,326.9 477,321.7 485,315.1 493,310.1 501,308.4 509,307.0 517,306.8 525,306.8 533,306.8 541,306.8 549,306.8 557,306.8 565,305.9 573,304.9 581,304.3 589,305.3 597,306.0 605,306.7 613,307.5 621,308.3 629,308.7 637,309.0 645,309.0 653,309.0 661,309.0 669,312.4 677,316.0" fill="none" stroke="#00ffff" stroke-width="2" stroke-linejoin="round" shape-rendering="crispEdges"/>
<polyline clip-path="url(#crsi)" points="13,404.2 21,405.5 29,407.6 37,409.5 45,410.6 53,411.7 61,412.2 69,412.6 77,412.9 85,413.0 93,413.0 101,412.7 109,412.1 117,411.1 125,410.0 133,408.9 141,408.0 149,406.9 157,405.3 165,403.6 173,401.6 181,399.6 189,397.7 197,395.6 205,392.6 213,389.6 221,386.6 229,383.6 237,380.4 245,377.2 253,373.2 261,369.2 269,365.6 277,359.8 285,354.5 293,349.9 301,345.9 309,341.8 317,337.2 325,332.7 333,328.4 341,323.6 349,318.6 357,315.7 365,312.6 373,311.3 381,311.7 389,313.0 397,313.2 405,313.2 413,313.2 421,313.2 429,313.2 437,313.2 445,313.2 453,313.2 461,313.2 469,313.2 477,313.2 485,313.0 493,312.6 501,312.3 509,312.0 517,311.8 525,311.7 533,311.7 541,311.7 549,311.6 557,310.5 565,310.7 573,310.9 581,311.1 589,311.3 597,311.5 605,311.7 613,311.7 621,311.7 629,310.3 637,310.0 645,309.6 653,308.9 661,308.3 669,308.1 677,307.9" fill="none" stroke="#ffff00" stroke-width="2" stroke-linejoin="round" shape-rendering="crispEdges"/>
<g style="mix-blend-mode:difference" shape-rendering="crispEdges">
<line x1="14" y1="303.5" x2="679" y2="303.5" stroke="#c0c0c0" stroke-width="1" stroke-dasharray="3 3"/>
<line x1="14" y1="314.5" x2="679" y2="314.5" stroke="#c0c0c0" stroke-width="1" stroke-dasharray="3 3"/>
<line x1="14" y1="332.5" x2="679" y2="332.5" stroke="#c0c0c0" stroke-width="1" stroke-dasharray="3 3"/>
<line x1="14" y1="360.5" x2="679" y2="360.5" stroke="#c0c0c0" stroke-width="1" stroke-dasharray="3 3"/>
<line x1="14" y1="389.5" x2="679" y2="389.5" stroke="#c0c0c0" stroke-width="1" stroke-dasharray="3 3"/>
<line x1="14" y1="406.5" x2="679" y2="406.5" stroke="#c0c0c0" stroke-width="1" stroke-dasharray="3 3"/>
</g>
<path d="M16 41 L23 41 L19.5 45 Z" fill="#fff"/>
<text x="27.93" y="46" font-size="9.8" fill="#ffffff" stroke="#ffffff" stroke-width="0.2" textLength="50.23" lengthAdjust="spacingAndGlyphs" >GBPJPY,H1</text>
<text x="84.42" y="46" font-size="9.8" fill="#ffffff" stroke="#ffffff" stroke-width="0.2" textLength="32.46" lengthAdjust="spacingAndGlyphs" >161.595</text>
<text x="120.81" y="46" font-size="9.8" fill="#ffffff" stroke="#ffffff" stroke-width="0.2" textLength="32.92" lengthAdjust="spacingAndGlyphs" >161.629</text>
<text x="156.33" y="46" font-size="9.8" fill="#ffffff" stroke="#ffffff" stroke-width="0.2" textLength="31.81" lengthAdjust="spacingAndGlyphs" >161.482</text>
<text x="192.30" y="46" font-size="9.8" fill="#ffffff" stroke="#ffffff" stroke-width="0.2" textLength="33.08" lengthAdjust="spacingAndGlyphs" >161.505</text>
<text x="16.94" y="303" font-size="9.8" fill="#ffffff" stroke="#ffffff" stroke-width="0.2" textLength="43.63" lengthAdjust="spacingAndGlyphs" >R(9,26,52)</text>
<text x="62.89" y="303" font-size="9.8" fill="#ffffff" stroke="#ffffff" stroke-width="0.2" textLength="17.10" lengthAdjust="spacingAndGlyphs" >93.3</text>
<text x="83.25" y="303" font-size="9.8" fill="#ffffff" stroke="#ffffff" stroke-width="0.2" textLength="18.77" lengthAdjust="spacingAndGlyphs" >95.8</text>
<text x="105.19" y="303" font-size="9.8" fill="#ffffff" stroke="#ffffff" stroke-width="0.2" textLength="21.17" lengthAdjust="spacingAndGlyphs" >-14.0</text>
<text x="16.92" y="433" font-size="9.8" fill="#ffffff" stroke="#ffffff" stroke-width="0.2" textLength="65.97" lengthAdjust="spacingAndGlyphs" >MACD(12,26,9)</text>
<text x="84.84" y="433" font-size="9.8" fill="#ffffff" stroke="#ffffff" stroke-width="0.2" textLength="28.43" lengthAdjust="spacingAndGlyphs" >0.1457</text>
<text x="116.24" y="433" font-size="9.8" fill="#ffffff" stroke="#ffffff" stroke-width="0.2" textLength="28.13" lengthAdjust="spacingAndGlyphs" >0.0774</text>
<rect x="680" y="54" width="2" height="1" fill="#fff" shape-rendering="crispEdges"/>
<text x="684.80" y="57.5" font-size="9.8" fill="#ffffff" stroke="#ffffff" stroke-width="0.2" textLength="33.26" lengthAdjust="spacingAndGlyphs" >161.660</text>
<rect x="680" y="87" width="2" height="1" fill="#fff" shape-rendering="crispEdges"/>
<text x="684.80" y="90.5" font-size="9.8" fill="#ffffff" stroke="#ffffff" stroke-width="0.2" textLength="33.26" lengthAdjust="spacingAndGlyphs" >160.810</text>
<rect x="680" y="120" width="2" height="1" fill="#fff" shape-rendering="crispEdges"/>
<text x="684.80" y="123.5" font-size="9.8" fill="#ffffff" stroke="#ffffff" stroke-width="0.2" textLength="33.26" lengthAdjust="spacingAndGlyphs" >159.960</text>
<rect x="680" y="153" width="2" height="1" fill="#fff" shape-rendering="crispEdges"/>
<text x="684.79" y="156.5" font-size="9.8" fill="#ffffff" stroke="#ffffff" stroke-width="0.2" textLength="33.29" lengthAdjust="spacingAndGlyphs" >159.110</text>
<rect x="680" y="186" width="2" height="1" fill="#fff" shape-rendering="crispEdges"/>
<text x="684.80" y="189.5" font-size="9.8" fill="#ffffff" stroke="#ffffff" stroke-width="0.2" textLength="33.26" lengthAdjust="spacingAndGlyphs" >158.260</text>
<rect x="680" y="219" width="2" height="1" fill="#fff" shape-rendering="crispEdges"/>
<text x="684.80" y="222.5" font-size="9.8" fill="#ffffff" stroke="#ffffff" stroke-width="0.2" textLength="33.26" lengthAdjust="spacingAndGlyphs" >157.410</text>
<rect x="680" y="252" width="2" height="1" fill="#fff" shape-rendering="crispEdges"/>
<text x="684.80" y="255.5" font-size="9.8" fill="#ffffff" stroke="#ffffff" stroke-width="0.2" textLength="33.26" lengthAdjust="spacingAndGlyphs" >156.560</text>
<rect x="680" y="285" width="2" height="1" fill="#fff" shape-rendering="crispEdges"/>
<text x="684.80" y="288.5" font-size="9.8" fill="#ffffff" stroke="#ffffff" stroke-width="0.2" textLength="33.28" lengthAdjust="spacingAndGlyphs" >155.735</text>
<rect x="681" y="55" width="41" height="11" fill="#fff"/>
<text x="684.79" y="64" font-size="9.8" fill="#000000" stroke="#000000" stroke-width="0.2" textLength="33.59" lengthAdjust="spacingAndGlyphs" >161.505</text>
<rect x="680" y="360" width="2" height="1" fill="#fff" shape-rendering="crispEdges"/>
<rect x="680" y="483" width="2" height="1" fill="#fff" shape-rendering="crispEdges"/>
<rect x="680" y="292" width="1" height="1" fill="#fff" shape-rendering="crispEdges"/>
<rect x="680" y="417" width="1" height="1" fill="#fff" shape-rendering="crispEdges"/>
<rect x="680" y="422" width="1" height="1" fill="#fff" shape-rendering="crispEdges"/>
<rect x="680" y="551" width="1" height="1" fill="#fff" shape-rendering="crispEdges"/>
<text x="683.20" y="300" font-size="9.8" fill="#ffffff" stroke="#ffffff" stroke-width="0.2" textLength="15.36" lengthAdjust="spacingAndGlyphs" >120</text>
<text x="682.34" y="307" font-size="9.8" fill="#ffffff" stroke="#ffffff" stroke-width="0.2" textLength="14.40" lengthAdjust="spacingAndGlyphs" >100</text>
<text x="682.65" y="318" font-size="9.8" fill="#ffffff" stroke="#ffffff" stroke-width="0.2" textLength="8.96" lengthAdjust="spacingAndGlyphs" >80</text>
<text x="682.68" y="336" font-size="9.8" fill="#ffffff" stroke="#ffffff" stroke-width="0.2" textLength="8.94" lengthAdjust="spacingAndGlyphs" >50</text>
<text x="683.04" y="364" font-size="9.8" fill="#ffffff" stroke="#ffffff" stroke-width="0.2" textLength="18.03" lengthAdjust="spacingAndGlyphs" >0.00</text>
<text x="682.11" y="393" font-size="9.8" fill="#ffffff" stroke="#ffffff" stroke-width="0.2" textLength="12.73" lengthAdjust="spacingAndGlyphs" >-50</text>
<text x="682.11" y="409" font-size="9.8" fill="#ffffff" stroke="#ffffff" stroke-width="0.2" textLength="12.73" lengthAdjust="spacingAndGlyphs" >-80</text>
<text x="682.08" y="414" font-size="9.8" fill="#ffffff" stroke="#ffffff" stroke-width="0.2" textLength="18.99" lengthAdjust="spacingAndGlyphs" >-100</text>
<text x="683.06" y="431" font-size="9.8" fill="#ffffff" stroke="#ffffff" stroke-width="0.2" textLength="26.98" lengthAdjust="spacingAndGlyphs" >0.9061</text>
<text x="682.73" y="487" font-size="9.8" fill="#ffffff" stroke="#ffffff" stroke-width="0.2" textLength="18.65" lengthAdjust="spacingAndGlyphs" >0.00</text>
<text x="682.70" y="549" font-size="9.8" fill="#ffffff" stroke="#ffffff" stroke-width="0.2" textLength="31.18" lengthAdjust="spacingAndGlyphs" >-1.0024</text>
<text x="686" y="0"></text>
<rect x="13" y="553" width="1" height="3" fill="#fff" shape-rendering="crispEdges"/>
<text x="11.98" y="565" font-size="9.8" fill="#ffffff" stroke="#ffffff" stroke-width="0.2" textLength="54.89" lengthAdjust="spacingAndGlyphs" >12 May 2022</text>
<rect x="77" y="553" width="1" height="3" fill="#fff" shape-rendering="crispEdges"/>
<text x="75.88" y="565" font-size="9.8" fill="#ffffff" stroke="#ffffff" stroke-width="0.2" textLength="57.70" lengthAdjust="spacingAndGlyphs" >13 May 01:00</text>
<rect x="141" y="553" width="1" height="3" fill="#fff" shape-rendering="crispEdges"/>
<text x="139.88" y="565" font-size="9.8" fill="#ffffff" stroke="#ffffff" stroke-width="0.2" textLength="57.70" lengthAdjust="spacingAndGlyphs" >13 May 09:00</text>
<rect x="205" y="553" width="1" height="3" fill="#fff" shape-rendering="crispEdges"/>
<text x="203.88" y="565" font-size="9.8" fill="#ffffff" stroke="#ffffff" stroke-width="0.2" textLength="57.70" lengthAdjust="spacingAndGlyphs" >13 May 17:00</text>
<rect x="269" y="553" width="1" height="3" fill="#fff" shape-rendering="crispEdges"/>
<text x="267.88" y="565" font-size="9.8" fill="#ffffff" stroke="#ffffff" stroke-width="0.2" textLength="57.70" lengthAdjust="spacingAndGlyphs" >16 May 01:00</text>
<rect x="333" y="553" width="1" height="3" fill="#fff" shape-rendering="crispEdges"/>
<text x="331.88" y="565" font-size="9.8" fill="#ffffff" stroke="#ffffff" stroke-width="0.2" textLength="57.70" lengthAdjust="spacingAndGlyphs" >16 May 09:00</text>
<rect x="397" y="553" width="1" height="3" fill="#fff" shape-rendering="crispEdges"/>
<text x="395.88" y="565" font-size="9.8" fill="#ffffff" stroke="#ffffff" stroke-width="0.2" textLength="57.70" lengthAdjust="spacingAndGlyphs" >16 May 17:00</text>
<rect x="461" y="553" width="1" height="3" fill="#fff" shape-rendering="crispEdges"/>
<text x="459.88" y="565" font-size="9.8" fill="#ffffff" stroke="#ffffff" stroke-width="0.2" textLength="57.70" lengthAdjust="spacingAndGlyphs" >17 May 01:00</text>
<rect x="525" y="553" width="1" height="3" fill="#fff" shape-rendering="crispEdges"/>
<text x="523.88" y="565" font-size="9.8" fill="#ffffff" stroke="#ffffff" stroke-width="0.2" textLength="57.70" lengthAdjust="spacingAndGlyphs" >17 May 09:00</text>
<rect x="589" y="553" width="1" height="3" fill="#fff" shape-rendering="crispEdges"/>
<text x="587.88" y="565" font-size="9.8" fill="#ffffff" stroke="#ffffff" stroke-width="0.2" textLength="57.70" lengthAdjust="spacingAndGlyphs" >17 May 17:00</text>
<rect x="653" y="553" width="1" height="3" fill="#fff" shape-rendering="crispEdges"/>
<text x="651.88" y="565" font-size="9.8" fill="#ffffff" stroke="#ffffff" stroke-width="0.2" textLength="57.70" lengthAdjust="spacingAndGlyphs" >18 May 01:00</text>
<text x="30.08" y="22.5" font-size="12" fill="#141c2c" stroke="#141c2c" stroke-width="0" textLength="55.93" lengthAdjust="spacingAndGlyphs" >GBPJPY,H1</text>
</svg></body></html>
